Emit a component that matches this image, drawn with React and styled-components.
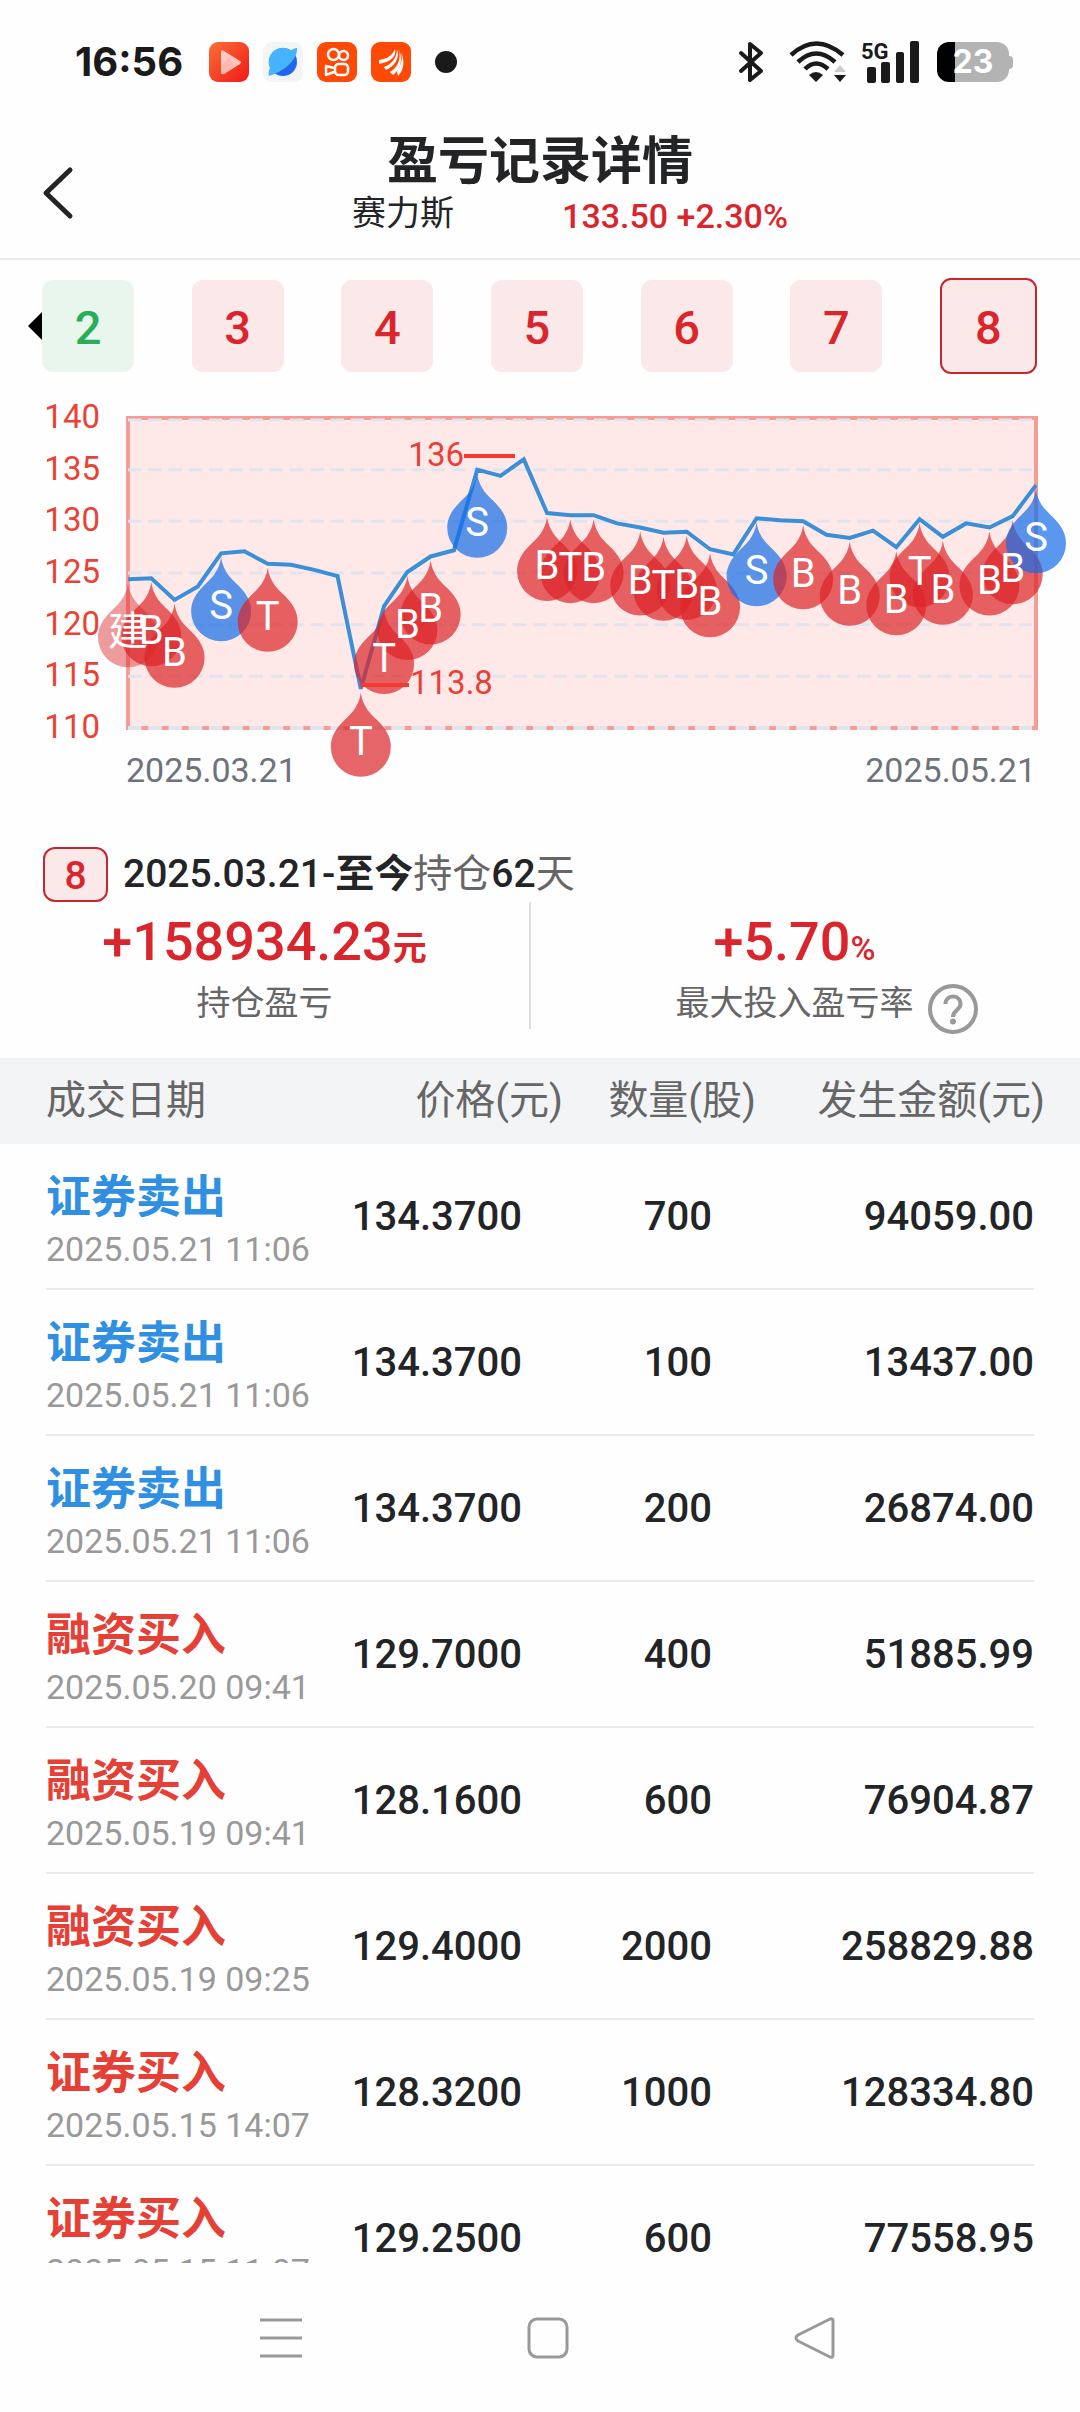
import React from "react";
import styled, { createGlobalStyle } from "styled-components";

const C = {
  page: "#fefefe",
  ink: "#222426",
  grey: "#666666",
  faint: "#999999",
  red: "#d9252b",
  green: "#27ae56",
  tintRed: "#fbe8e8",
  tintGreen: "#e8f6ed",
  sell: "#2f8fe3",
  buy: "#e63f35",
  axis: "#ea4335",
  line: "#ececec",
};

const GlobalStyle = createGlobalStyle`
  * { box-sizing: border-box; }
  body {
    margin: 0;
    background: ${C.page};
    color: ${C.ink};
    font-family: Roboto, "Noto Sans CJK SC", sans-serif;
  }
  button {
    padding: 0;
    border: 0;
    background: none;
    color: inherit;
    font: inherit;
    cursor: pointer;
  }
  svg { display: block; overflow: visible; }
`;

const Screen = styled.div`
  display: flex;
  flex-direction: column;
  height: 100vh;
  overflow: hidden;
`;

/* ---------- status bar ---------- */

const StatusBar = styled.div`
  display: flex;
  flex: none;
  align-items: center;
  justify-content: space-between;
  height: 124px;
  padding: 0 67px 0 75px;
`;

const StatusGroup = styled.div`
  display: flex;
  align-items: center;
  gap: ${(p) => p.$gap}px;
`;

const Clock = styled.span`
  margin-right: 12px;
  font: 700 40px/48px Inter, sans-serif;
  color: #1a1a1a;
`;

const Dot = styled.span`
  width: 22px;
  height: 22px;
  margin-left: 10px;
  border-radius: 50%;
  background: #1a1a1a;
`;

const Battery = styled.span`
  display: flex;
  align-items: center;
`;

const BatteryBody = styled.span`
  width: 72px;
  height: 40px;
  border-radius: 12px;
  background: linear-gradient(90deg, #000 25%, #b3b3b3 25%);
  color: #fff;
  font: 700 32px/40px Inter, sans-serif;
  text-align: center;
`;

const BatteryTip = styled.span`
  width: 4px;
  height: 13px;
  border-radius: 0 4px 4px 0;
  background: #b3b3b3;
`;

/* ---------- title bar ---------- */

const TitleBar = styled.header`
  display: grid;
  flex: none;
  grid-template-columns: 120px 1fr 120px;
  align-items: center;
  height: 136px;
  border-bottom: 2px solid #ececec;
`;

const BackButton = styled.button`
  padding: 4px 0 0 40px;
`;

const Titles = styled.div`
  display: flex;
  flex-direction: column;
  align-items: center;
  padding-bottom: 10px;
`;

const Title = styled.h1`
  margin: 0;
  font-size: 51px;
  font-weight: 700;
  line-height: 60px;
`;

const Quote = styled.p`
  display: flex;
  align-items: flex-start;
  gap: 108px;
  margin: 0;
  padding-left: 60px;
  font-size: 34px;
  line-height: 42px;
`;

const QuoteValue = styled.span`
  color: ${C.red};
  font-weight: 500;
  line-height: 48px;
`;

/* ---------- period picker ---------- */

const Periods = styled.nav`
  display: flex;
  flex: none;
  align-items: center;
  padding: 18px 43px 16px 28px;
`;

const PeriodList = styled.div`
  display: flex;
  flex: 1;
  align-items: center;
  justify-content: space-between;
`;

const Period = styled.button`
  width: ${(p) => (p.$active ? 97 : 92)}px;
  height: ${(p) => (p.$active ? 96 : 92)}px;
  padding-top: 3px;
  border-radius: 11px;
  border: ${(p) => (p.$active ? "2px solid #c4272d" : "0")};
  background: ${(p) => (p.$gain ? C.tintRed : C.tintGreen)};
  color: ${(p) => (p.$gain ? C.red : C.green)};
  font-size: 47px;
  font-weight: 500;
  line-height: 60px;
`;

/* ---------- chart ---------- */

const ChartSvg = styled.svg`
  flex: none;
  width: 100%;
  height: auto;
  font-family: Roboto, "Noto Sans CJK SC", sans-serif;
`;

/* ---------- summary ---------- */

const Summary = styled.section`
  flex: none;
  padding: 47px 0 29px;
`;

const Holding = styled.div`
  display: flex;
  align-items: center;
  gap: 15px;
  padding: 0 43px;
`;

const Badge = styled.span`
  width: 65px;
  height: 55px;
  border: 2px solid #c4272d;
  border-radius: 12px;
  background: ${C.tintRed};
  color: ${C.red};
  font-size: 39px;
  font-weight: 500;
  line-height: 54px;
  text-align: center;
`;

const HoldingText = styled.p`
  margin: 0;
  color: ${C.grey};
  font-size: 39px;
  line-height: 55px;
`;

const Strong = styled.b`
  color: ${C.ink};
  font-weight: ${(p) => p.$weight};
`;

const Stats = styled.div`
  display: grid;
  grid-template-columns: 1fr 1fr;
  padding-right: 22px;
`;

const Stat = styled.div`
  padding: 8px 0 1px;
  & + & {
    border-left: 2px solid #dedede;
  }
`;

const StatValue = styled.div`
  height: 64px;
  color: ${C.red};
  font-size: 54px;
  font-weight: 500;
  line-height: 64px;
  text-align: center;
`;

const Unit = styled.span`
  font-size: 34px;
  font-weight: ${(p) => p.$weight};
  line-height: 1;
`;

const StatLabel = styled.div`
  display: grid;
  grid-template-columns: 1fr auto 1fr;
  height: 45px;
  margin-top: 9px;
  color: ${C.grey};
  font-size: 34px;
  line-height: 40px;
`;

const LabelText = styled.span`
  grid-column: 2;
`;

const HelpButton = styled.button`
  justify-self: start;
  height: 52px;
  margin-left: 13px;
`;

/* ---------- trade table ---------- */

const TradeArea = styled.main`
  flex: 1;
  min-height: 0;
  overflow: hidden;
`;

const Table = styled.table`
  display: block;
  border-spacing: 0;
`;

const Head = styled.thead`
  display: block;
  background: #f3f4f6;
`;

const HeadRow = styled.tr`
  display: grid;
  grid-template-columns: 342fr 175fr 193fr 289fr;
  align-items: center;
  height: 86px;
  padding: 0 35px 0 46px;
`;

const HeadCell = styled.th`
  padding: 0;
  color: ${C.grey};
  font-size: 40px;
  font-weight: 400;
  line-height: 56px;
  text-align: ${(p) => (p.$start ? "left" : "right")};
  white-space: nowrap;
`;

const Body = styled.tbody`
  display: block;
  padding: 0 46px;
`;

const Row = styled.tr`
  display: grid;
  grid-template-columns: 300fr 176fr 190fr 322fr;
  align-items: center;
  height: 146px;
  border-bottom: 2px solid ${C.line};
`;

const KindCell = styled.td`
  padding: 10px 0 0;
  white-space: nowrap;
`;

const Kind = styled.div`
  color: ${(p) => (p.$sell ? C.sell : C.buy)};
  font-size: 45px;
  font-weight: 700;
  line-height: 56px;
`;

const Stamp = styled.div`
  color: ${C.faint};
  font-size: 34px;
  line-height: 46px;
`;

const NumCell = styled.td`
  padding: 2px 0 0;
  font-size: 40px;
  font-weight: 500;
  line-height: 48px;
  text-align: right;
`;

/* ---------- system navigation ---------- */

const SystemNav = styled.nav`
  display: flex;
  flex: none;
  align-items: center;
  justify-content: center;
  gap: 225px;
  height: 149px;
  padding-left: 16px;
`;

/* ---------- data ---------- */

const periods = [
  { n: 2, gain: false },
  { n: 3, gain: true },
  { n: 4, gain: true },
  { n: 5, gain: true },
  { n: 6, gain: true },
  { n: 7, gain: true },
  { n: 8, gain: true },
];

const prices = [
  124.4, 124.5, 122.4, 123.7, 126.9, 127.1, 125.9, 125.8, 125.3, 124.7,
  113.8, 121.8, 125.1, 126.6, 127.2, 135.0, 134.4, 136.0, 130.8, 130.6,
  130.6, 129.8, 129.4, 128.9, 129.0, 127.3, 126.8, 130.3, 130.1, 130.0,
  128.7, 128.4, 129.1, 127.5, 130.2, 128.5, 129.8, 129.4, 130.5, 133.5,
];

const marks = [
  [0, "建"], [1, "B"], [2, "B"], [4, "S"], [6, "T"], [10, "T"], [11, "T"],
  [12, "B"], [13, "B"], [15, "S"], [18, "B"], [19, "T"], [20, "B"],
  [22, "B"], [23, "T"], [24, "B"], [25, "B"], [27, "S"], [29, "B"],
  [31, "B"], [33, "B"], [34, "T"], [35, "B"], [37, "B"], [38, "B"], [39, "S"],
];

const trades = [
  ["证券卖出", "2025.05.21 11:06", "134.3700", "700", "94059.00"],
  ["证券卖出", "2025.05.21 11:06", "134.3700", "100", "13437.00"],
  ["证券卖出", "2025.05.21 11:06", "134.3700", "200", "26874.00"],
  ["融资买入", "2025.05.20 09:41", "129.7000", "400", "51885.99"],
  ["融资买入", "2025.05.19 09:41", "128.1600", "600", "76904.87"],
  ["融资买入", "2025.05.19 09:25", "129.4000", "2000", "258829.88"],
  ["证券买入", "2025.05.15 14:07", "128.3200", "1000", "128334.80"],
  ["证券买入", "2025.05.15 11:07", "129.2500", "600", "77558.95"],
];

/* ---------- icons ---------- */

const VideoApp = () => (
  <svg width="40" height="40" viewBox="0 0 40 40" aria-hidden="true">
    <defs>
      <linearGradient id="video" x1="0" y1="0" x2="1" y2="1">
        <stop offset="0" stopColor="#fb7035" />
        <stop offset="1" stopColor="#f01818" />
      </linearGradient>
    </defs>
    <rect width="40" height="40" rx="9" fill="url(#video)" />
    <path d="M12 10q0-3 3-1l16 10q2 1 0 3L15 32q-3 1-3-2z" fill="#ffc9c2" />
    <path d="M12 24l8-8 6 8-11 8q-3 1-3-2z" fill="#ffb0a8" opacity=".7" />
  </svg>
);

const BrowserApp = () => (
  <svg width="40" height="40" viewBox="0 0 40 40" aria-hidden="true">
    <rect width="40" height="40" rx="9" fill="#f3f4f5" />
    <circle cx="20" cy="20" r="14" fill="#2166ee" />
    <path
      d="M34 6c1 9-9 22-28 28-1-3 0-6 1-8A14 14 0 0 1 27 8c3 0 4-2 7-2z"
      fill="#45b4fd"
    />
  </svg>
);

const CameraApp = () => (
  <svg width="40" height="40" viewBox="0 0 40 40" aria-hidden="true">
    <rect width="40" height="40" rx="9" fill="#ff4a06" />
    <g fill="none" stroke="#fff" strokeWidth="2.500">
      <circle cx="16.500" cy="12.500" r="5.500" />
      <circle cx="26.500" cy="13.500" r="4.500" />
      <rect x="18" y="22" width="13" height="11" rx="3.500" />
      <path d="M17 26l-8-2v9l8-3" strokeLinejoin="round" />
    </g>
  </svg>
);

const WingApp = () => (
  <svg width="40" height="40" viewBox="0 0 40 40" aria-hidden="true">
    <rect width="40" height="40" rx="9" fill="#ff4a06" />
    <g fill="#fff">
      <path d="M8 18C16 17 21 14 24 7c2 8-5 13-16 15z" />
      <path d="M13 25C21 22 26 16 26 7c3 9-2 17-11 21z" />
      <path d="M19 30c8-5 11-13 9-22 4 9 2 19-6 25z" />
      <path d="M26 29c4-6 6-12 4-19 4 9 3 18-3 24z" />
    </g>
  </svg>
);

const Bluetooth = () => (
  <svg width="24" height="42" viewBox="0 0 24 42" role="img" aria-label="Bluetooth">
    <path
      d="M2 12l20 18-11 9V3l11 9L2 30"
      fill="none"
      stroke="#1a1a1a"
      strokeWidth="4"
      strokeLinejoin="round"
      strokeLinecap="round"
    />
  </svg>
);

const Wifi = () => (
  <svg width="58" height="42" viewBox="0 0 58 42" role="img" aria-label="Wi-Fi">
    <g fill="none" stroke="#1a1a1a" strokeWidth="4.500">
      <path d="M2 14Q27-9 54 14" />
      <path d="M9 21Q27 4 46 21" />
      <path d="M16 28Q27 17 39 28" />
    </g>
    <path d="M20 34q7-6 14 0l-7 7z" fill="#1a1a1a" />
    <path d="M45 31l6-7 6 7z" fill="#ccc" />
    <path d="M45 34h12l-6 7z" fill="#1a1a1a" />
  </svg>
);

const Signal = () => (
  <svg width="58" height="42" viewBox="0 0 58 42" role="img" aria-label="5G">
    <text x="0" y="18" fontFamily="Roboto, sans-serif" fontWeight="700" fontSize="22" fill="#1a1a1a">
      5G
    </text>
    <g fill="#1a1a1a">
      <rect x="6" y="26" width="9" height="16" rx="2" />
      <rect x="20" y="21" width="9" height="21" rx="2" />
      <rect x="35" y="11" width="8" height="31" rx="2" />
      <rect x="49" y="0" width="9" height="42" rx="2" />
    </g>
  </svg>
);

/* ---------- chart drawing ---------- */

const LEFT = 128;
const RIGHT = 1036;
const TOP = 28;
const BOTTOM = 338;
const px = (i) => LEFT + (i * (RIGHT - LEFT)) / (prices.length - 1);
const py = (p) => BOTTOM - ((p - 110) * (BOTTOM - TOP)) / 30;
const DROP =
  "M0 4C2 19 11 26 17 32C25 40 30 48 30 58A30 30 0 0 1-30 58C-30 48-25 40-17 32C-11 26-2 19 0 4Z";

function PriceChart() {
  const points = prices.map((p, i) => `${px(i)},${py(p)}`).join(" ");
  return (
    <ChartSvg viewBox="0 0 1080 410" role="img" aria-label="2025.03.21 - 2025.05.21">
      <rect
        x={LEFT}
        y={TOP}
        width={RIGHT - LEFT}
        height={BOTTOM - TOP}
        fill="#ffe9e8"
        stroke="#f49d97"
        strokeWidth="4"
      />
      {[140, 135, 130, 125, 120, 115, 110].map((v) => (
        <g key={v}>
          <line
            x1={LEFT}
            x2={RIGHT - 4}
            y1={py(v) + (v === 140 ? 2 : 0)}
            y2={py(v) + (v === 140 ? 2 : 0)}
            stroke="#e1e4ef"
            strokeWidth={v === 110 ? 4 : 3}
            strokeDasharray="13.500 6.750"
          />
          <text x="100" y={py(v) + 10} textAnchor="end" fontSize="33" fill={C.axis}>
            {v}
          </text>
        </g>
      ))}
      <polyline points={points} fill="none" stroke="#3b8fd6" strokeWidth="4" />
      {marks.map(([i, label]) => (
        <path
          key={i}
          d={DROP}
          transform={`translate(${px(i)} ${py(prices[i])})`}
          fill={label === "S" ? "#146ce8" : "#dc2328"}
          fillOpacity={label === "建" ? 0.45 : 0.7}
        />
      ))}
      <g fontSize="40" fill="#fff" textAnchor="middle">
        {marks.map(([i, label]) => (
          <text key={i} x={px(i)} y={py(prices[i]) + 66}>
            {label}
          </text>
        ))}
      </g>
      <g stroke="#f43a30" strokeWidth="4">
        <line x1="464" x2="515" y1="66" y2="66" />
        <line x1="360" x2="409" y1="295" y2="295" />
      </g>
      <g fontSize="33" fill="#ea3f34">
        <text x="464" y="76" textAnchor="end">136</text>
        <text x="410" y="304">113.8</text>
      </g>
      <g fontSize="34" fill="#6e727c">
        <text x="126" y="392">2025.03.21</text>
        <text x="1036" y="392" textAnchor="end">2025.05.21</text>
      </g>
    </ChartSvg>
  );
}

export default function App() {
  return (
    <Screen>
      <GlobalStyle />
      <StatusBar>
        <StatusGroup $gap={14}>
          <Clock>16:56</Clock>
          <VideoApp />
          <BrowserApp />
          <CameraApp />
          <WingApp />
          <Dot />
        </StatusGroup>
        <StatusGroup $gap={18}>
          <StatusGroup $gap={26}>
            <Bluetooth />
            <StatusGroup $gap={14}>
              <Wifi />
              <Signal />
            </StatusGroup>
          </StatusGroup>
          <Battery>
            <BatteryBody>23</BatteryBody>
            <BatteryTip />
          </Battery>
        </StatusGroup>
      </StatusBar>

      <TitleBar>
        <BackButton aria-label="返回">
          <svg width="36" height="56" viewBox="0 0 36 56">
            <path
              d="M30 5L6 28l24 23"
              fill="none"
              stroke={C.ink}
              strokeWidth="5"
              strokeLinecap="round"
              strokeLinejoin="round"
            />
          </svg>
        </BackButton>
        <Titles>
          <Title>盈亏记录详情</Title>
          <Quote>
            <span>赛力斯</span>
            <QuoteValue>133.50 +2.30%</QuoteValue>
          </Quote>
        </Titles>
      </TitleBar>

      <Periods>
        <button aria-label="上一页">
          <svg width="14" height="28" viewBox="0 0 14 28">
            <path d="M14 0v28L0 14z" fill="#000" />
          </svg>
        </button>
        <PeriodList>
          {periods.map(({ n, gain }) => (
            <Period key={n} $gain={gain} $active={n === 8} aria-pressed={n === 8}>
              {n}
            </Period>
          ))}
        </PeriodList>
      </Periods>

      <PriceChart />

      <Summary>
        <Holding>
          <Badge>8</Badge>
          <HoldingText>
            <Strong $weight={500}>2025.03.21-</Strong>
            <Strong $weight={700}>至今</Strong>
            持仓
            <Strong $weight={500}>62</Strong>天
          </HoldingText>
        </Holding>
        <Stats>
          <Stat>
            <StatValue>
              +158934.23<Unit $weight={700}>元</Unit>
            </StatValue>
            <StatLabel>
              <LabelText>持仓盈亏</LabelText>
            </StatLabel>
          </Stat>
          <Stat>
            <StatValue>
              +5.70<Unit $weight={500}>%</Unit>
            </StatValue>
            <StatLabel>
              <LabelText>最大投入盈亏率</LabelText>
              <HelpButton aria-label="说明">
                <svg width="52" height="52" viewBox="0 0 52 52">
                  <g fill="none" stroke="#999" strokeWidth="4">
                    <circle cx="26" cy="26" r="23" />
                    <path d="M18.500 21c0-10 15-10 15 0 0 6-7.500 6-7.500 13" />
                  </g>
                  <circle cx="26" cy="38.500" r="3" fill="#999" />
                </svg>
              </HelpButton>
            </StatLabel>
          </Stat>
        </Stats>
      </Summary>

      <TradeArea>
        <Table>
          <Head>
            <HeadRow>
              <HeadCell $start scope="col">成交日期</HeadCell>
              <HeadCell scope="col">价格(元)</HeadCell>
              <HeadCell scope="col">数量(股)</HeadCell>
              <HeadCell scope="col">发生金额(元)</HeadCell>
            </HeadRow>
          </Head>
          <Body>
            {trades.map(([kind, time, price, count, amount], i) => (
              <Row key={i}>
                <KindCell>
                  <Kind $sell={kind.endsWith("卖出")}>{kind}</Kind>
                  <Stamp>{time}</Stamp>
                </KindCell>
                <NumCell>{price}</NumCell>
                <NumCell>{count}</NumCell>
                <NumCell>{amount}</NumCell>
              </Row>
            ))}
          </Body>
        </Table>
      </TradeArea>

      <SystemNav>
        <button aria-label="菜单">
          <svg width="42" height="42" viewBox="0 0 42 42">
            <path d="M0 3h42M0 21h42M0 39h42" stroke="#999" strokeWidth="3" />
          </svg>
        </button>
        <button aria-label="主页">
          <svg width="42" height="42" viewBox="0 0 42 42">
            <rect x="2" y="2" width="38" height="38" rx="8" fill="none" stroke="#999" strokeWidth="3" />
          </svg>
        </button>
        <button aria-label="后退">
          <svg width="42" height="42" viewBox="0 0 42 42">
            <path
              d="M36 2q3-1 3 2v34q0 3-3 2L4 24q-4-3 0-6z"
              fill="none"
              stroke="#999"
              strokeWidth="3"
              strokeLinejoin="round"
            />
          </svg>
        </button>
      </SystemNav>
    </Screen>
  );
}
